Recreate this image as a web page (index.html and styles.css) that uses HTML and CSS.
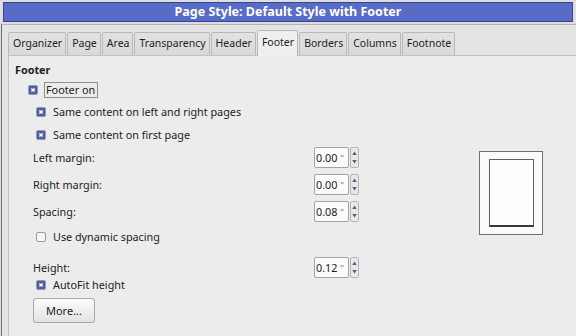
FILE: index.html
```html
<!DOCTYPE html>
<html>
<head>
<meta charset="utf-8">
<link rel="stylesheet" href="styles.css">
</head>
<body>
<header class="titlebar">Page Style: Default Style with Footer</header>
<div class="window">
  <nav class="tabs">
    <span class="tab">Organizer</span>
    <span class="tab">Page</span>
    <span class="tab">Area</span>
    <span class="tab">Transparency</span>
    <span class="tab">Header</span>
    <span class="tab active">Footer</span>
    <span class="tab">Borders</span>
    <span class="tab">Columns</span>
    <span class="tab">Footnote</span>
  </nav>
  <section class="panel">
    <div class="group-title">Footer</div>
    <div class="check lvl1 r-footeron">
      <svg class="cb" viewBox="0 0 10 10"><rect x="0.5" y="0.5" width="9" height="9" rx="1.5" fill="#535f98" stroke="#8d96c0"/><path d="M3.4 3.4l3.2 3.2M6.6 3.4l-3.2 3.2" stroke="#fff" stroke-width="1.4"/></svg>
      <span class="focus">Footer on</span>
    </div>
    <div class="check lvl2 r-samelr">
      <svg class="cb" viewBox="0 0 10 10"><rect x="0.5" y="0.5" width="9" height="9" rx="1.5" fill="#535f98" stroke="#8d96c0"/><path d="M3.4 3.4l3.2 3.2M6.6 3.4l-3.2 3.2" stroke="#fff" stroke-width="1.4"/></svg>
      <span>Same content on left and right pages</span>
    </div>
    <div class="check lvl2 r-samefirst">
      <svg class="cb" viewBox="0 0 10 10"><rect x="0.5" y="0.5" width="9" height="9" rx="1.5" fill="#535f98" stroke="#8d96c0"/><path d="M3.4 3.4l3.2 3.2M6.6 3.4l-3.2 3.2" stroke="#fff" stroke-width="1.4"/></svg>
      <span>Same content on first page</span>
    </div>
    <div class="form">
      <div class="fields">
        <div class="field-row r-left">
          <span class="label">Left margin:</span>
          <div class="spin"><span class="value">0.00 <span class="unit">"</span></span><span class="arrows"><svg viewBox="0 0 7 19" width="7" height="19"><path d="M3.5 3.5L5.8 7H1.2Z M3.5 15.5L5.8 12H1.2Z" fill="#5b6280"/></svg></span></div>
        </div>
        <div class="field-row r-right">
          <span class="label">Right margin:</span>
          <div class="spin"><span class="value">0.00 <span class="unit">"</span></span><span class="arrows"><svg viewBox="0 0 7 19" width="7" height="19"><path d="M3.5 3.5L5.8 7H1.2Z M3.5 15.5L5.8 12H1.2Z" fill="#5b6280"/></svg></span></div>
        </div>
        <div class="field-row r-spacing">
          <span class="label">Spacing:</span>
          <div class="spin"><span class="value">0.08 <span class="unit">"</span></span><span class="arrows"><svg viewBox="0 0 7 19" width="7" height="19"><path d="M3.5 3.5L5.8 7H1.2Z M3.5 15.5L5.8 12H1.2Z" fill="#5b6280"/></svg></span></div>
        </div>
        <div class="check sub r-dynamic">
          <svg class="cb" viewBox="0 0 10 10"><rect x="0.5" y="0.5" width="9" height="9" rx="1.5" fill="#f7f7f7" stroke="#9c9c9c"/></svg>
          <span>Use dynamic spacing</span>
        </div>
        <div class="field-row r-height">
          <span class="label">Height:</span>
          <div class="spin"><span class="value">0.12 <span class="unit">"</span></span><span class="arrows"><svg viewBox="0 0 7 19" width="7" height="19"><path d="M3.5 3.5L5.8 7H1.2Z M3.5 15.5L5.8 12H1.2Z" fill="#5b6280"/></svg></span></div>
        </div>
        <div class="check sub r-autofit">
          <svg class="cb" viewBox="0 0 10 10"><rect x="0.5" y="0.5" width="9" height="9" rx="1.5" fill="#535f98" stroke="#8d96c0"/><path d="M3.4 3.4l3.2 3.2M6.6 3.4l-3.2 3.2" stroke="#fff" stroke-width="1.4"/></svg>
          <span>AutoFit height</span>
        </div>
        <button class="more">More...</button>
      </div>
      <div class="preview"><div class="page"></div></div>
    </div>
  </section>
</div>
</body>
</html>
```
FILE: styles.css
```css
html, body {
  margin: 0;
  padding: 0;
}
body {
  width: 576px;
  height: 336px;
  overflow: hidden;
  background: #dedede;
  font-family: "Noto Sans", "Open Sans", sans-serif;
  font-size: 11px;
  color: #222;
}
.titlebar {
  margin: 2px 3px 0 3px;
  height: 18px;
  border: 1px solid #34469a;
  background: #586cc6;
  color: #fff;
  font-weight: bold;
  font-size: 12.5px;
  line-height: 18px;
  text-align: center;
}
.window {
  box-sizing: border-box;
  margin: 2px 0 0 1px;
  border-top: 1px solid #b4b4b4;
  border-left: 1px solid #6c6c6c;
  background: #e4e4e4;
  height: 312px;
}
.tabs {
  display: flex;
  align-items: flex-end;
  gap: 1px;
  padding: 0 0 0 6px;
  height: 30px;
}
.tab {
  height: 22px;
  line-height: 21px;
  font-size: 10.5px;
  padding: 0 3px 0 4px;
  border: 1px solid #b8b8b8;
  border-bottom: none;
  border-radius: 2px 2px 0 0;
  background: linear-gradient(#e2e2e2, #d9d9d9);
  color: #222;
}
.tab.active {
  height: 25px;
  line-height: 23px;
  background: #efefef;
  margin-bottom: -1px;
  z-index: 1;
}
.panel {
  box-sizing: border-box;
  margin-left: 6px;
  height: 281px;
  border-top: 1px solid #c2c2c2;
  border-left: 1px solid #c2c2c2;
  background: #ececec;
  padding: 6px 0 0 6px;
  font-size: 10.8px;
}
.group-title {
  font-weight: bold;
  line-height: 16px;
  height: 16px;
}
.check {
  display: flex;
  align-items: center;
  line-height: 16px;
}
.cb {
  width: 10px;
  height: 10px;
  flex: none;
}
.lvl1 {
  margin-left: 13px;
  gap: 6px;
  height: 19px;
}
.lvl2 {
  margin-left: 21px;
  gap: 7px;
  height: 20px;
}
.sub {
  margin-left: 3px;
  gap: 7px;
  height: 16px;
}
.focus {
  border: 1px solid #8e8e8e;
  padding: 0 2px 0 1px;
  line-height: 14px;
}
.r-footeron { margin-top: 2px; }
.r-samelr { margin-top: 3px; }
.r-samefirst { margin-top: 3px; }
.form {
  display: flex;
  align-items: flex-start;
  margin-left: 18px;
  margin-top: 2px;
}
.fields {
  width: 325px;
  display: flex;
  flex-direction: column;
  align-items: flex-start;
}
.field-row {
  display: flex;
  align-items: center;
  height: 21px;
}
.label {
  width: 281px;
  line-height: 16px;
}
.r-right { margin-top: 6px; }
.r-spacing { margin-top: 6px; }
.r-dynamic { margin-top: 7px; }
.r-height { margin-top: 12px; }
.r-autofit { margin-top: -1px; }
.spin {
  display: flex;
  gap: 1px;
  height: 21px;
}
.value {
  box-sizing: border-box;
  width: 35px;
  height: 21px;
  border: 1px solid #a3a3a3;
  border-radius: 2px;
  background: #fbfbfb;
  padding-left: 1px;
  line-height: 19px;
  color: #222;
}
.unit {
  color: #777;
  font-size: 9px;
}
.arrows {
  box-sizing: border-box;
  width: 9px;
  height: 21px;
  border: 1px solid #b6b6b6;
  border-radius: 2px;
  background: #e8e8e8;
  display: flex;
  align-items: center;
  justify-content: center;
}
.more {
  margin-top: 5px;
  width: 62px;
  height: 25px;
  border: 1px solid #a8a8a8;
  border-radius: 3px;
  background: linear-gradient(#fbfbfb, #e3e3e3);
  font-family: "Noto Sans", "Open Sans", sans-serif;
  font-size: 11px;
  color: #222;
  padding: 0;
}
.preview {
  box-sizing: border-box;
  margin-left: 121px;
  margin-top: 4px;
  width: 64px;
  height: 84px;
  border: 1px solid #707070;
  background: #fbfbfb;
  padding: 7px 0 0 9px;
}
.page {
  box-sizing: border-box;
  width: 45px;
  height: 68px;
  border: 1px solid #606060;
  border-bottom: 2px solid #3a3a3a;
  background: #fdfdfd;
}
```
